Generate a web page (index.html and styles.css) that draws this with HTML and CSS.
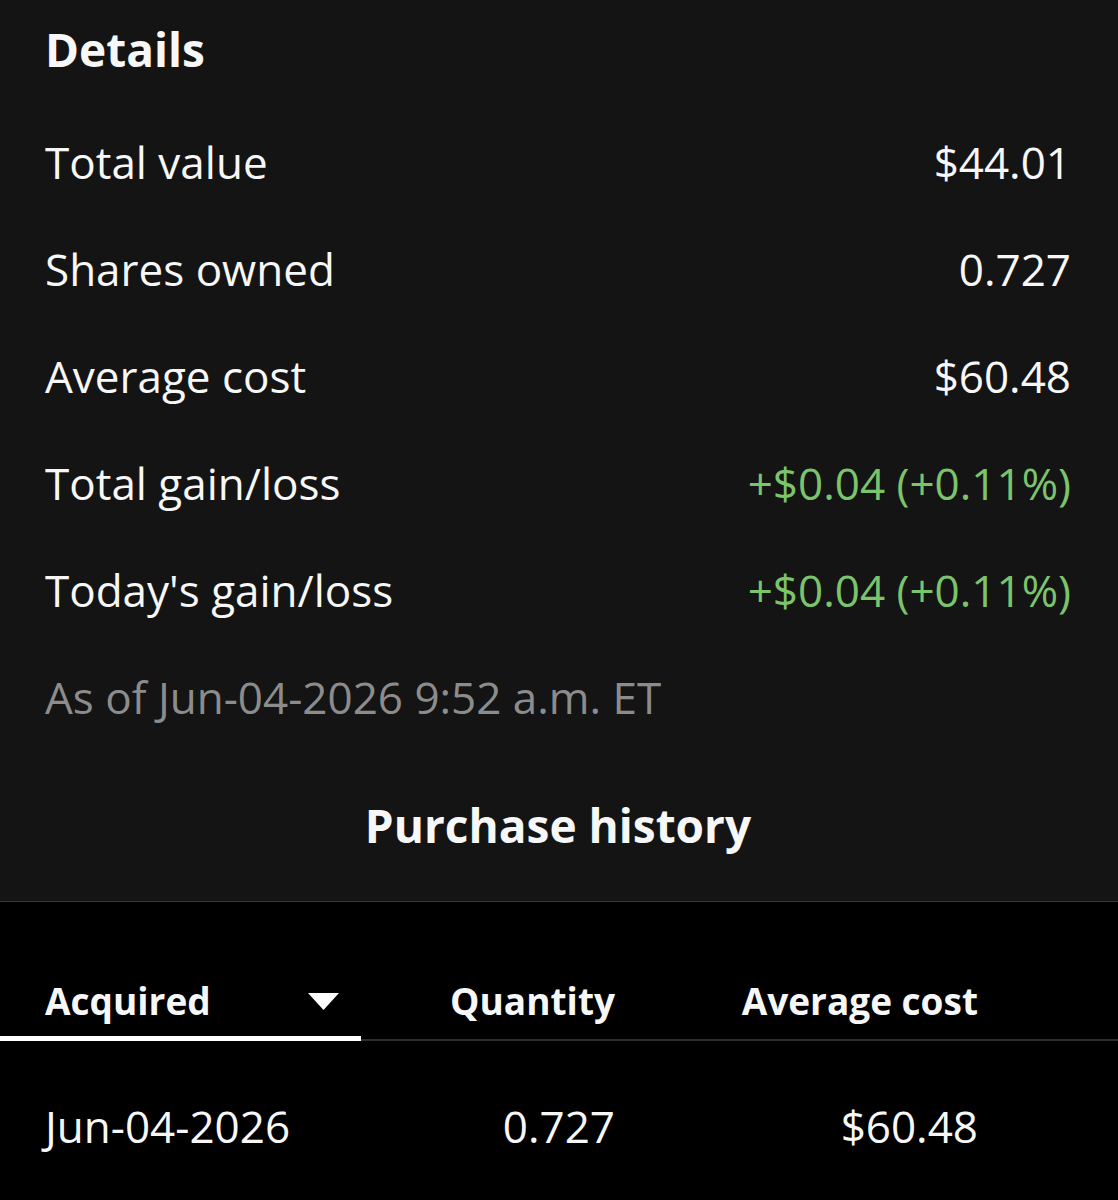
FILE: index.html
```html
<!DOCTYPE html>
<html lang="en">
<head>
<meta charset="utf-8">
<title>Details</title>
<link rel="stylesheet" href="styles.css">
</head>
<body>
<section class="details">
  <h1 class="details-title">Details</h1>
  <div class="row"><span class="label">Total value</span><span class="value">$44.01</span></div>
  <div class="row"><span class="label">Shares owned</span><span class="value">0.727</span></div>
  <div class="row"><span class="label">Average cost</span><span class="value">$60.48</span></div>
  <div class="row"><span class="label">Total gain/loss</span><span class="value gain">+$0.04 (+0.11%)</span></div>
  <div class="row"><span class="label">Today's gain/loss</span><span class="value gain">+$0.04 (+0.11%)</span></div>
  <div class="row asof">As of Jun-04-2026 9:52 a.m. ET</div>
  <h2 class="history-title">Purchase history</h2>
</section>
<section class="history">
  <div class="table-head">
    <div class="th th-acquired active">
      <span>Acquired</span>
      <svg class="sort" width="31" height="17" viewBox="0 0 31 17"><polygon points="0,0 31,0 15.5,17" fill="#ffffff"/></svg>
    </div>
    <div class="th num">Quantity</div>
    <div class="th num">Average cost</div>
    <div class="th"></div>
  </div>
  <div class="table-row">
    <div class="td">Jun-04-2026</div>
    <div class="td num">0.727</div>
    <div class="td num">$60.48</div>
    <div class="td"></div>
  </div>
</section>
</body>
</html>
```

FILE: styles.css
```css
html, body {
  margin: 0;
  padding: 0;
  background: #000000;
  color: #f7f7f7;
  font-family: "Open Sans", "Noto Sans", sans-serif;
}

.details {
  background: #141414;
  padding: 19px 47px 46px 45px;
  border-bottom: 1px solid #38383a;
}

.details-title {
  margin: 0 0 30px 0;
  font-size: 46px;
  line-height: 60px;
  font-weight: 700;
}

.row {
  height: 107px;
  display: flex;
  justify-content: space-between;
  align-items: center;
  font-size: 44px;
  line-height: 57px;
}

.gain {
  color: #7cc46b;
}

.asof {
  color: #8c8c8c;
}

.history-title {
  margin: 44px 0 0 0;
  text-align: center;
  font-size: 46px;
  line-height: 60px;
  font-weight: 700;
}

.table-head,
.table-row {
  display: grid;
  grid-template-columns: 361px 279px 363px 1fr;
}

.table-head {
  padding-top: 74px;
  border-bottom: 2px solid #2e2e30;
}

.th {
  font-size: 37px;
  line-height: 50px;
  font-weight: 700;
  padding: 0 25px 13px 0;
  position: relative;
}

.th-acquired {
  display: flex;
  justify-content: space-between;
  align-items: center;
  padding-left: 45px;
  padding-right: 22px;
}

.th-acquired.active::after {
  content: "";
  position: absolute;
  left: 0;
  right: 0;
  bottom: -2px;
  height: 5px;
  background: #ffffff;
}

.sort {
  display: block;
  margin-top: 0;
}

.num {
  text-align: right;
}

.td {
  font-size: 44px;
  line-height: 57px;
  padding: 57px 25px 0 0;
}

.table-row .td:first-child {
  padding-left: 45px;
}
```
